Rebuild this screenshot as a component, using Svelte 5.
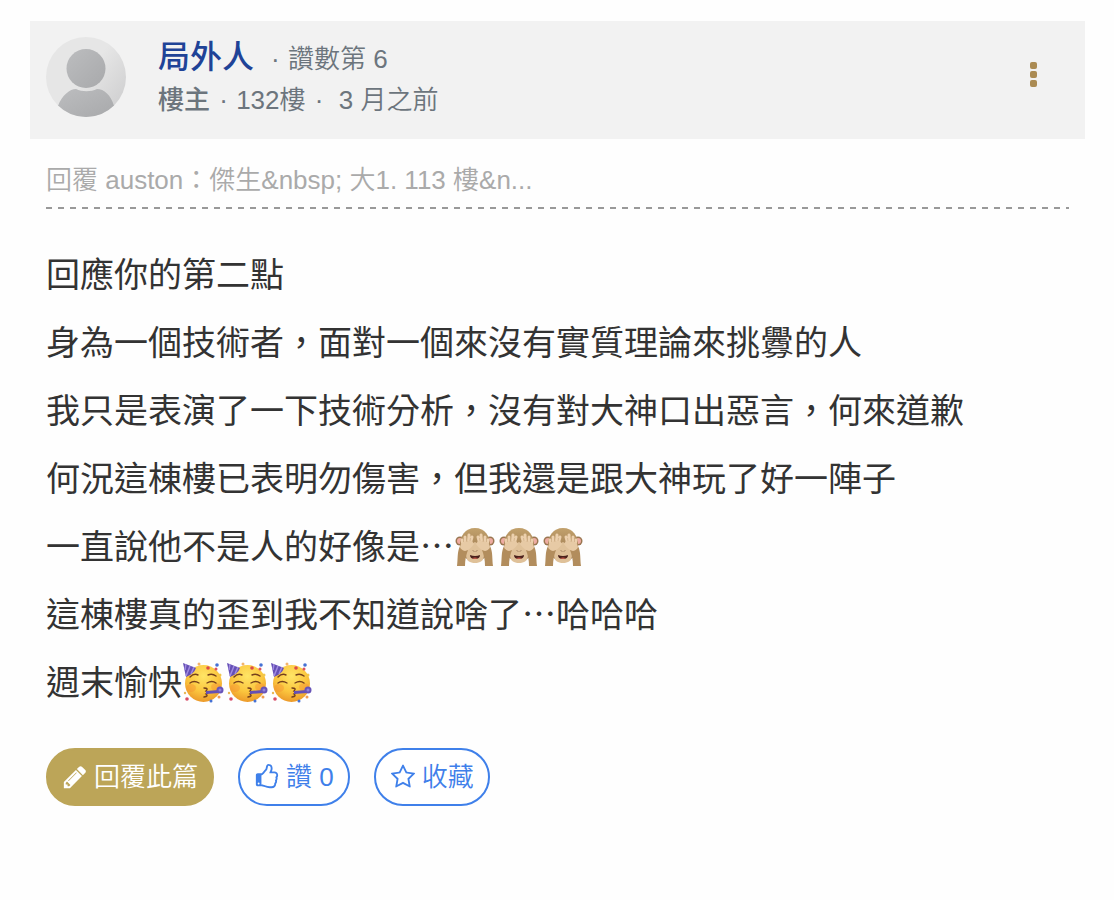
<script lang="ts">
  let liked = $state(false)
  let saved = $state(false)

  const author = '局外人'
  const lines = [
    { text: '回應你的第二點' },
    { text: '身為一個技術者，面對一個來沒有實質理論來挑釁的人' },
    { text: '我只是表演了一下技術分析，沒有對大神口出惡言，何來道歉' },
    { text: '何況這棟樓已表明勿傷害，但我還是跟大神玩了好一陣子' },
    { text: '一直說他不是人的好像是…', emoji: 'monkey' },
    { text: '這棟樓真的歪到我不知道說啥了…哈哈哈' },
    { text: '週末愉快', emoji: 'party' }
  ]
</script>

{#snippet monkey()}
  <svg class="emoji" viewBox="0 0 44 44" role="img" aria-label="🙈">
    <circle cx="6" cy="17" r="4.5" fill="#9a7650" />
    <circle cx="36" cy="17" r="4.5" fill="#9a7650" />
    <circle cx="6" cy="17" r="3" fill="#eeaca2" />
    <circle cx="36" cy="17" r="3" fill="#eeaca2" />
    <path d="M21 4C11 4 6 12 6 21C6 31 12 37 21 37C30 37 36 31 36 21C36 12 31 4 21 4Z" fill="url(#fur)" />
    <path d="M21 18C26 20 30 26 30 31C30 37 26 39 21 39C16 39 12 37 12 31C12 26 16 20 21 18Z" fill="#dfc199" />
    <path d="M16 31Q21 33 26 31Q26 35 21 35Q16 35 16 31Z" fill="#4a211c" />
    <path d="M18 34Q21 33 24 34Q21 36 18 34Z" fill="#c45a4c" />
    <path d="M19 26.5l1 1M23 26.5l-1 1" stroke="#765338" />
    <path d="M3 42C4 35 3 28 6 22L14 26C12 31 11 36 11 42Z" fill="#b28d5d" />
    <path d="M39 42C38 35 39 28 36 22L28 26C30 31 31 36 31 42Z" fill="#b28d5d" />
    <g fill="none" stroke="#ecd0ad" stroke-width="3" stroke-linecap="round">
      <path d="M9 21L8 16M11 20L11 13M14 20L15 11M16 20L18 13" />
      <path d="M33 21L34 16M31 20L31 13M28 20L27 11M26 20L24 13" />
    </g>
    <path d="M6 23Q7 18 12 17L18 17L20 20Q16 26 11 27Q7 26 6 23Z" fill="#e7caa5" />
    <path d="M36 23Q35 18 30 17L24 17L22 20Q26 26 31 27Q35 26 36 23Z" fill="#e7caa5" />
    <path d="M9.5 18V14M12.8 18L13 12M16 17L16.5 14M32.5 18V14M29.2 18L29 12M26 17L25.5 14" stroke="#c6a47a" stroke-width="0.6" />
  </svg>
{/snippet}

{#snippet party()}
  <svg class="emoji" viewBox="0 0 44 44" role="img" aria-label="🥳">
    <circle cx="21.5" cy="23.5" r="18.5" fill="url(#face)" />
    <ellipse cx="9" cy="28" rx="5" ry="4" fill="#f58c32" opacity="0.4" />
    <ellipse cx="34" cy="27" rx="5" ry="4" fill="#f58c32" opacity="0.4" />
    <path d="M1 3L14 8Q12 14 4 17Z" fill="#6550b5" />
    <path d="M4 4L3 10M8 6L4 16M12 7L9 14" stroke="#a18be0" stroke-width="1.5" />
    <g fill="none" stroke="#75401c" stroke-width="1.4" stroke-linecap="round">
      <path d="M8 17Q12 13 16 15M26 15Q30 13 34 16" />
      <path d="M8 23Q12 20 17 23M25 23Q30 20 34 23" />
      <path d="M22 28Q27 28 24 31Q28 32 24 34Q27 36 22 37" />
    </g>
    <path d="M24 31L37 30V33L24 34Z" fill="#6550b5" />
    <circle cx="38" cy="30" r="3.5" fill="#6854b8" />
    <circle cx="38" cy="30" r="1.5" fill="#9282d8" />
    <circle cx="26" cy="8" r="1.8" fill="#dd4b48" />
    <circle cx="35" cy="5" r="1.8" fill="#4571d4" />
    <circle cx="38" cy="15" r="1.5" fill="#f1c74b" />
    <circle cx="17" cy="4" r="1.5" fill="#f3b36b" />
    <circle cx="34" cy="9" r="1.5" fill="#dd5362" />
    <circle cx="5" cy="39" r="1.8" fill="#d84d67" />
    <circle cx="29" cy="41" r="1.5" fill="#4571d4" />
    <circle cx="37" cy="37" r="1.5" fill="#f19b50" />
    <circle cx="3" cy="33" r="1.2" fill="#e9b755" />
  </svg>
{/snippet}

<article class="post">
  <header class="post-header">
    <svg class="avatar" viewBox="0 0 80 80" aria-hidden="true">
      <defs>
        <linearGradient id="disc" x1="0.2" y1="0.2" x2="1" y2="0.8">
          <stop offset="0.4" stop-color="#e6e6e6" />
          <stop offset="1" stop-color="#cfcfd0" />
        </linearGradient>
        <linearGradient id="person" x1="0" y1="0" x2="1" y2="1">
          <stop offset="0" stop-color="#bcbdbf" />
          <stop offset="1" stop-color="#a8a9ab" />
        </linearGradient>
        <linearGradient id="fur" x1="0" y1="0" x2="0" y2="1">
          <stop offset="0" stop-color="#c2a16c" />
          <stop offset="1" stop-color="#94714a" />
        </linearGradient>
        <radialGradient id="face" cx="0.5" cy="0.3" r="0.7">
          <stop offset="0" stop-color="#ffe566" />
          <stop offset="0.6" stop-color="#fbc63e" />
          <stop offset="1" stop-color="#ec9a2a" />
        </radialGradient>
        <clipPath id="round"><circle cx="40" cy="40" r="40" /></clipPath>
      </defs>
      <circle cx="40" cy="40" r="40" fill="url(#disc)" />
      <g clip-path="url(#round)" fill="url(#person)">
        <circle cx="40" cy="31.5" r="19.5" />
        <path d="M12 69C16 58 24 52 30 52C36 55 45 55 51 52C58 52 65 58 68 69V80H12Z" />
      </g>
    </svg>

    <div class="who">
      <div class="name-row">
        <a class="name" href="#author">{author}</a>
        <span><span class="dot">·</span> 讚數第 6</span>
      </div>
      <div class="meta">
        <strong>樓主</strong> <span class="dot">·</span> 132樓 <span class="dot">·</span>&nbsp; 3 月之前
      </div>
    </div>

    <button class="more" type="button" aria-label="更多">
      <svg viewBox="0 0 8 26" aria-hidden="true">
        <rect y="0" width="7" height="7" rx="2" />
        <rect y="9" width="7" height="7" rx="2" />
        <rect y="18" width="7" height="7" rx="2" />
      </svg>
    </button>
  </header>

  <div class="post-body">
    <div class="quote">回覆 auston：傑生&amp;nbsp; 大1. 113 樓&amp;n...</div>

    <div class="content">
      {#each lines as line}
        <p>
          {line.text}{#if line.emoji}{#each [1, 2, 3] as _}{#if line.emoji === 'monkey'}{@render monkey()}{:else}{@render party()}{/if}{/each}{/if}
        </p>
      {/each}
    </div>

    <div class="actions">
      <button class="btn btn-reply" type="button">
        <svg viewBox="0 0 1792 1792" aria-hidden="true">
          <path d="M491 1536l91-91-235-235-91 91v107h128v128h107zm523-928q0-22-22-22-10 0-17 7l-542 542q-7 7-7 17 0 22 22 22 10 0 17-7l542-542q7-7 7-17zm-54-192l416 416-832 832h-416v-416l832-832zm683 96q0 53-37 90l-166 166-416-416 166-165q36-38 90-38 53 0 91 38l235 234q37 39 37 91z" />
        </svg>
        <span>回覆此篇</span>
      </button>
      <button class="btn" type="button" aria-pressed={liked} onclick={() => (liked = !liked)}>
        <svg viewBox="0 0 1792 1792" aria-hidden="true">
          <path d="M384 1344q0-26-19-45t-45-19-45 19-19 45 19 45 45 19 45-19 19-45zm1152-576q0-51-39-89.5t-89-38.5h-352q0-58 48-159.5t48-160.5q0-98-32-145t-128-47q-26 26-38 85t-30.5 125.5-59.5 109.5q-22 23-77 91-4 5-23 30t-31.5 41-34.5 42.5-40 44-38.5 35.5-40 27-35.5 9h-32v640h32q13 0 31.5 3t33 6.5 38 11 35 11.5 35.5 12.5 29 10.5q211 73 342 73h121q192 0 192-167 0-26-5-56 30-16 47.5-52.5t17.5-73.5-18-69q53-50 53-119 0-25-10-55.5t-25-47.5q32-1 53.5-47t21.5-81zm128-1q0 89-49 163 9 33 9 69 0 77-38 144 3 21 3 43 0 101-60 178 1 139-85 219.5t-227 80.5h-129q-96 0-189.5-22.5t-216.5-65.5q-116-40-138-40h-288q-53 0-90.5-37.5t-37.5-90.5v-640q0-53 37.5-90.5t90.5-37.5h274q36-24 137-155 58-75 107-128 24-25 35.5-85.5t30.5-126.5 62-108q39-37 90-37 84 0 151 32.5t102 101.5 35 186q0 93-48 192h176q104 0 180 76t76 179z" />
        </svg>
        <span>讚 {liked ? 1 : 0}</span>
      </button>
      <button class="btn" type="button" aria-pressed={saved} onclick={() => (saved = !saved)}>
        <svg viewBox="0 0 1792 1792" aria-hidden="true">
          <path d="M1201 1004l306-297-422-62-189-382-189 382-422 62 306 297-73 421 378-199 377 199zm527-357q0 22-26 48l-363 354 86 500q1 7 1 20 0 50-41 50-19 0-40-12l-449-236-449 236q-22 12-40 12-21 0-31.5-14.5t-10.5-35.5q0-6 2-20l86-500-364-354q-25-27-25-48 0-37 56-46l502-73 225-455q19-41 49-41t49 41l225 455 502 73q56 9 56 46z" />
        </svg>
        <span>收藏</span>
      </button>
    </div>
  </div>
</article>

<style>
  :global(body) {
    margin: 0;
    background: #fefefe;
  }

  .post {
    padding: 21px 29px 24px 30px;
    font-family: "Liberation Sans", "Noto Sans CJK TC", sans-serif;
    font-size: 26px;
    color: #6c757d;
  }

  .post-header {
    display: flex;
    align-items: flex-start;
    padding: 16px 16px 18px;
    background: #f2f2f2;
  }

  .avatar {
    width: 80px;
    height: 80px;
    margin-right: 32px;
  }

  .who {
    flex: 1;
    font-weight: 350;
  }

  .name-row {
    display: flex;
    align-items: baseline;
    gap: 15px;
    line-height: 40px;
  }

  .name {
    font-size: 32px;
    font-weight: 500;
    color: #1f4397;
    text-decoration: none;
  }

  .meta {
    line-height: 42px;
  }

  .meta strong {
    font-weight: 500;
  }

  .dot {
    margin: 0 1px 0 2px;
  }

  .more {
    padding: 25px 31px;
    border: 0;
    background: none;
    cursor: pointer;
  }

  .more svg {
    display: block;
    width: 8px;
    height: 26px;
    fill: #ab8b53;
  }

  .post-body {
    padding: 21px 16px 0;
  }

  .quote {
    padding-bottom: 9px;
    font-weight: 350;
    line-height: 40px;
    color: #aaa;
    background: repeating-linear-gradient(90deg, #999 0 6px, transparent 6px 12px) bottom / 100% 2px no-repeat;
  }

  .content {
    padding: 30px 0 33px;
    font-family: "Noto Sans CJK TC", sans-serif;
    font-size: 34px;
    line-height: 68px;
    color: #333;
  }

  .content p {
    margin: 0;
  }

  .emoji {
    width: 44px;
    height: 44px;
    vertical-align: -9px;
  }

  .actions {
    display: flex;
    flex-wrap: wrap;
    gap: 24px;
  }

  .btn {
    display: flex;
    align-items: center;
    gap: 6px;
    height: 58px;
    padding: 0 14px;
    border: 2px solid #3f80ea;
    border-radius: 29px;
    background: #fff;
    color: #3f80ea;
    font-family: inherit;
    font-size: 26px;
    font-weight: 350;
    cursor: pointer;
  }

  .btn svg {
    width: 26px;
    height: 26px;
    fill: currentColor;
  }

  .btn span {
    padding-bottom: 6px;
  }

  .btn-reply {
    border-color: #bca558;
    background: #bca558;
    color: #fff;
  }
</style>
